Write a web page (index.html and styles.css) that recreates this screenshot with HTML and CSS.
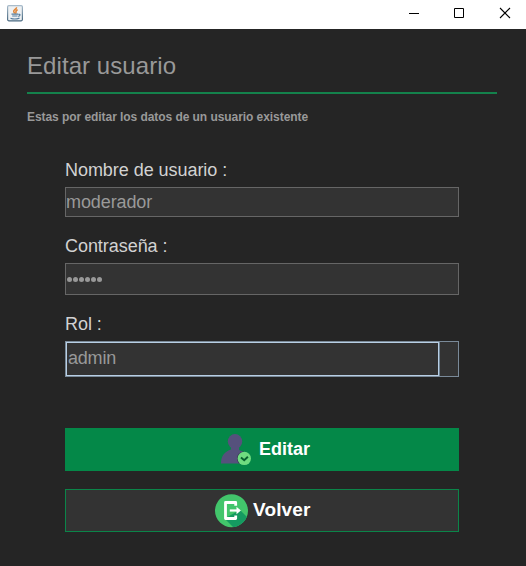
FILE: index.html
```html
<!DOCTYPE html>
<html lang="es">
<head>
<meta charset="utf-8">
<title>Editar usuario</title>
<link rel="stylesheet" href="styles.css">
</head>
<body>
<header class="titlebar">
  <svg class="app-icon" width="16" height="17" viewBox="0 0 16 17">
    <defs><linearGradient id="cup" x1="0" y1="0" x2="0" y2="1"><stop offset="0" stop-color="#a9bccb"/><stop offset="1" stop-color="#47677f"/></linearGradient></defs>
    <rect x=".6" y=".6" width="14.8" height="15.2" rx="1.2" fill="#eef1f3" stroke="url(#cup)" stroke-width="1.2"/>
    <path d="M9.500 2.200C10 4 6.200 4.800 6.700 6.500 6.900 7.300 7.600 7.500 7.500 8.600M10.600 4.800C8.600 5.600 8.800 6.500 9 7.200 9.100 7.800 8.700 8.200 8.400 8.600" fill="none" stroke="#e08537" stroke-width="1.500"/>
    <path d="M4.500 9.200h6.500M5.200 11h5.300M11.200 9.300c2.500-.5 2.300 1.900 0 2.100M3.500 13.200c2 .8 6.500.8 9-.1" fill="none" stroke="#557c9d" stroke-width="1.200"/>
  </svg>
  <svg class="controls" width="120" height="29" viewBox="0 0 120 29" fill="none" stroke="#000">
    <path d="M3 13.500h10M48.500 8.500h9v9h-9z"/>
    <path d="M94 8l10 10M104 8l-10 10" stroke-width="1.100"/>
  </svg>
</header>
<main class="content">
  <h1 class="title">Editar usuario</h1>
  <p class="subtitle">Estas por editar los datos de un usuario existente</p>
  <form class="form">
    <label class="label">Nombre de usuario :</label>
    <div class="field name">moderador</div>
    <label class="label">Contraseña :</label>
    <div class="field password"><i></i><i></i><i></i><i></i><i></i><i></i></div>
    <label class="label">Rol :</label>
    <div class="combo"><div class="combo-value">admin</div></div>
    <button class="button edit" type="button">
      <svg width="32" height="32" viewBox="0 0 32 32">
        <ellipse cx="15" cy="7.500" rx="7.200" ry="7.500" fill="#55517c"/>
        <path d="M11 12h8v4c4 1 7 3 8 6v7.500H1c0-8 4-12 10-14z" fill="#55517c"/>
        <path d="M17 24.500a7 7 0 0 1 7-7v12h-5q-2-2-2-5" fill="#34364f"/>
        <path d="M27 20h5v11h-5z" fill="#048848"/>
        <circle cx="24.300" cy="24.400" r="6.700" fill="#6fdc80"/>
        <path d="M21 23.500l3.200 2.800 3.700-3.500" fill="none" stroke="#08612e" stroke-width="1.900"/>
      </svg>
      <span>Editar</span>
    </button>
    <button class="button back" type="button">
      <svg width="34" height="34" viewBox="0 0 34 34">
        <defs><clipPath id="disc"><circle cx="16.500" cy="16.700" r="16.500"/></clipPath></defs>
        <g clip-path="url(#disc)">
          <path d="M0 0h34v34H0z" fill="#42c56b"/>
          <path d="M25 16l9 9v8H18l-8.500-8.500z" fill="#159a61"/>
        </g>
        <path d="M20.700 11.800V8.500H10.500v16H20.700V21.500" fill="none" stroke="#fff" stroke-width="2.800" stroke-linejoin="round"/>
        <path d="M14.800 16.500H23" stroke="#fff" stroke-width="2.200"/>
        <path d="M21.500 12.700l4.400 3.800-4.400 3.800z" fill="#fff"/>
      </svg>
      <span>Volver</span>
    </button>
  </form>
</main>
</body>
</html>
```
FILE: styles.css
```css
* { box-sizing: border-box; }
body {
  margin: 0;
  height: 566px;
  overflow: hidden;
  background: #252525;
  font-family: "Liberation Sans", Arial, sans-serif;
}
.titlebar {
  display: flex;
  justify-content: space-between;
  height: 29px;
  background: #fff;
}
.app-icon { margin: 5px 0 0 7px; }
.content { padding: 0 29px 0 27px; }
.title {
  height: 65px;
  margin: 0;
  padding-top: 23px;
  border-bottom: 2px solid #14824c;
  color: #999;
  font-size: 24px;
  font-weight: 400;
  line-height: 28px;
  letter-spacing: .07px;
}
.subtitle {
  margin: 16px 0 0;
  color: #999;
  font-size: 12px;
  font-weight: 700;
  line-height: 14px;
  letter-spacing: -.06px;
}
.form {
  display: flex;
  flex-direction: column;
  width: 394px;
  margin: 36px 0 0 38px;
}
.label {
  height: 27px;
  color: #d2d2d2;
  font-size: 18px;
  line-height: 20px;
  letter-spacing: -.05px;
}
.field {
  border: 1px solid #666;
  background: #333;
  color: #999;
  font-size: 18px;
}
.name {
  height: 30px;
  margin-bottom: 19px;
  line-height: 28px;
  letter-spacing: -.1px;
}
.password {
  display: flex;
  align-items: center;
  gap: 1px;
  height: 32px;
  margin-bottom: 19px;
  padding-left: 1px;
}
.password i { width: 5px; height: 5px; border-radius: 50%; background: #999; }
.combo {
  height: 36px;
  margin-bottom: 51px;
  border: 1px solid #7a8a99;
  background: #333;
}
.combo-value {
  width: 373px;
  height: 34px;
  padding-left: 1px;
  border: 1px solid #b8cfe5;
  box-shadow: 1px 0 #6f8394;
  color: #999;
  font-size: 18px;
  line-height: 31px;
  letter-spacing: -.2px;
}
.button {
  display: flex;
  align-items: center;
  height: 43px;
  padding: 0;
  border: 1px solid #0b8549;
  color: #fff;
  font: 700 18px/20px "Liberation Sans", Arial, sans-serif;
}
.button span { padding-bottom: 2px; }
.edit {
  margin-bottom: 18px;
  padding-left: 154px;
  gap: 7px;
  border-color: #048848;
  background: #048848;
}
.back {
  padding-left: 149px;
  gap: 4px;
  background: #333;
  font-size: 19px;
  letter-spacing: .15px;
}
```
